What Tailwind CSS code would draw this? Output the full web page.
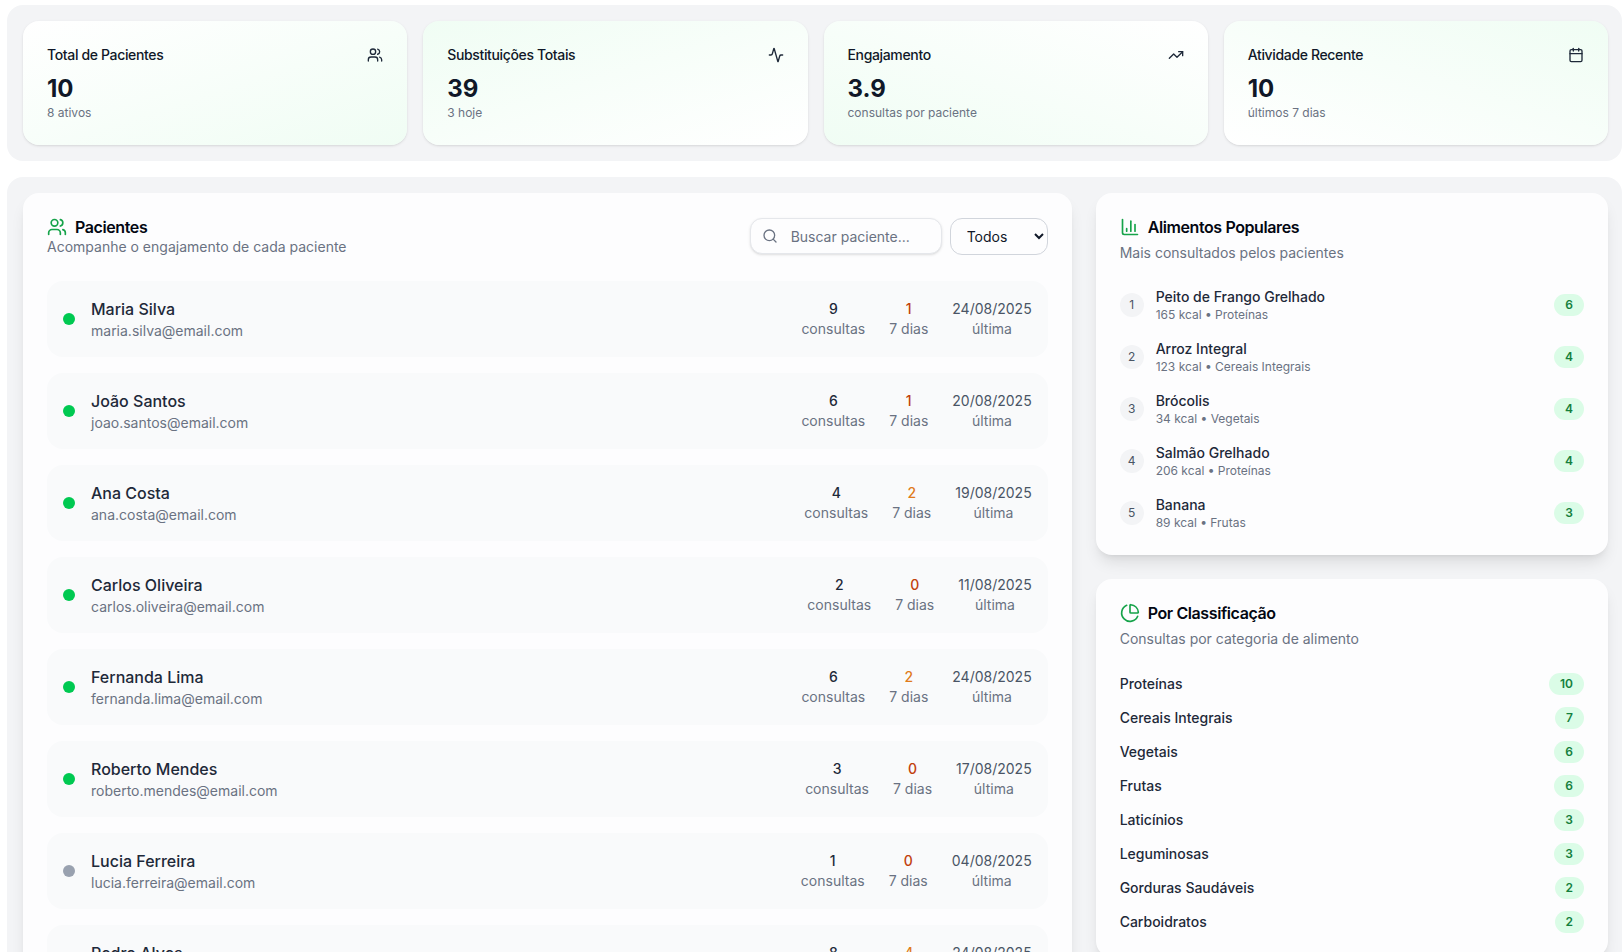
<!DOCTYPE html>
<html lang="pt-BR">
<head>
<meta charset="utf-8">
<title>Dashboard</title>
<script src="https://cdn.jsdelivr.net/npm/@tailwindcss/browser@4"></script>
</head>
<body class="bg-white font-['Inter',sans-serif] text-gray-900 h-screen overflow-hidden">
<div class="pl-[7px] pt-[5px] flex flex-col gap-4">
  <section class="bg-[#f3f4f6] rounded-2xl pl-4 pr-[14px] py-4">
    <div class="grid grid-cols-4 gap-4">
      <div class="rounded-2xl bg-linear-to-br from-white to-[#f0fdf4] shadow-sm">
        <div class="flex items-center justify-between px-6 pt-6 pb-2">
          <span class="text-sm font-medium tracking-tight">Total de Pacientes</span>
          <svg class="size-4 text-gray-800" viewBox="0 0 24 24" fill="none" stroke="currentColor" stroke-width="2" stroke-linecap="round" stroke-linejoin="round"><path d="M16 21v-2a4 4 0 0 0-4-4H6a4 4 0 0 0-4 4v2"/><circle cx="9" cy="7" r="4"/><path d="M22 21v-2a4 4 0 0 0-3-3.87"/><path d="M16 3.13a4 4 0 0 1 0 7.75"/></svg>
        </div>
        <div class="px-6 pb-6">
          <div class="text-2xl font-bold">10</div>
          <p class="text-xs text-gray-500">8 ativos</p>
        </div>
      </div>
      <div class="rounded-2xl bg-linear-to-br from-[#f0fdf4] to-white shadow-sm">
        <div class="flex items-center justify-between px-6 pt-6 pb-2">
          <span class="text-sm font-medium tracking-tight">Substituições Totais</span>
          <svg class="size-4 text-gray-800" viewBox="0 0 24 24" fill="none" stroke="currentColor" stroke-width="2" stroke-linecap="round" stroke-linejoin="round"><path d="M22 12h-2.48a2 2 0 0 0-1.93 1.46l-2.35 8.36a.25.25 0 0 1-.48 0L9.24 2.18a.25.25 0 0 0-.48 0l-2.35 8.36A2 2 0 0 1 4.49 12H2"/></svg>
        </div>
        <div class="px-6 pb-6">
          <div class="text-2xl font-bold">39</div>
          <p class="text-xs text-gray-500">3 hoje</p>
        </div>
      </div>
      <div class="rounded-2xl bg-linear-to-tr from-[#f0fdf4] to-white shadow-sm">
        <div class="flex items-center justify-between px-6 pt-6 pb-2">
          <span class="text-sm font-medium tracking-tight">Engajamento</span>
          <svg class="size-4 text-gray-800" viewBox="0 0 24 24" fill="none" stroke="currentColor" stroke-width="2" stroke-linecap="round" stroke-linejoin="round"><polyline points="22 7 13.5 15.5 8.5 10.5 2 17"/><polyline points="16 7 22 7 22 13"/></svg>
        </div>
        <div class="px-6 pb-6">
          <div class="text-2xl font-bold">3.9</div>
          <p class="text-xs text-gray-500">consultas por paciente</p>
        </div>
      </div>
      <div class="rounded-2xl bg-linear-to-bl from-[#f0fdf4] to-white shadow-sm">
        <div class="flex items-center justify-between px-6 pt-6 pb-2">
          <span class="text-sm font-medium tracking-tight">Atividade Recente</span>
          <svg class="size-4 text-gray-800" viewBox="0 0 24 24" fill="none" stroke="currentColor" stroke-width="2" stroke-linecap="round" stroke-linejoin="round"><path d="M8 2v4"/><path d="M16 2v4"/><rect x="3" y="4" width="18" height="18" rx="2"/><path d="M3 10h18"/></svg>
        </div>
        <div class="px-6 pb-6">
          <div class="text-2xl font-bold">10</div>
          <p class="text-xs text-gray-500">últimos 7 dias</p>
        </div>
      </div>
    </div>
  </section>

  <section class="bg-[#f3f4f6] rounded-2xl pl-4 pr-[14px] py-4">
    <div class="grid grid-cols-3 gap-6 items-start">
      <div class="col-span-2 bg-[#fdfdfe] rounded-2xl shadow-lg p-6">
        <div class="flex items-start justify-between mb-6">
          <div>
            <h2 class="flex items-center gap-2 text-base font-semibold leading-5 tracking-tight text-gray-950">
              <svg class="size-5 text-[#16a34a]" viewBox="0 0 24 24" fill="none" stroke="currentColor" stroke-width="2" stroke-linecap="round" stroke-linejoin="round"><path d="M16 21v-2a4 4 0 0 0-4-4H6a4 4 0 0 0-4 4v2"/><circle cx="9" cy="7" r="4"/><path d="M22 21v-2a4 4 0 0 0-3-3.87"/><path d="M16 3.13a4 4 0 0 1 0 7.75"/></svg>
              Pacientes
            </h2>
            <p class="text-sm text-gray-500">Acompanhe o engajamento de cada paciente</p>
          </div>
          <div class="flex items-start gap-2 pt-px">
            <div class="relative">
              <svg class="absolute left-3 top-[10px] size-4 text-gray-500" viewBox="0 0 24 24" fill="none" stroke="currentColor" stroke-width="2" stroke-linecap="round" stroke-linejoin="round"><circle cx="11" cy="11" r="8"/><path d="m21 21-4.3-4.3"/></svg>
              <input type="text" placeholder="Buscar paciente..." class="w-[192px] h-9 pl-10 pr-3 text-sm rounded-xl border border-gray-200 bg-[#fdfdfe] shadow-sm placeholder:text-gray-500">
            </div>
            <select class="w-[98px] h-[37px] pl-3 pr-2 text-sm rounded-xl border border-gray-300 bg-[#fdfdfe] text-gray-900">
              <option>Todos</option>
            </select>
          </div>
        </div>
        <div class="flex flex-col gap-4">
          <div class="flex items-center justify-between bg-gray-50 rounded-2xl p-4">
            <div class="flex items-center gap-4">
              <span class="size-3 rounded-full bg-green-500"></span>
              <div>
                <div class="font-medium text-gray-800">Maria Silva</div>
                <div class="text-sm text-gray-500">maria.silva@email.com</div>
              </div>
            </div>
            <div class="flex items-center gap-6 text-sm text-center">
              <div><div class="font-medium text-gray-800">9</div><div class="text-gray-500">consultas</div></div>
              <div><div class="font-medium text-[#c2410c]">1</div><div class="text-gray-500">7 dias</div></div>
              <div><div class="text-gray-600">24/08/2025</div><div class="text-gray-500">última</div></div>
            </div>
          </div>
          <div class="flex items-center justify-between bg-gray-50 rounded-2xl p-4">
            <div class="flex items-center gap-4">
              <span class="size-3 rounded-full bg-green-500"></span>
              <div>
                <div class="font-medium text-gray-800">João Santos</div>
                <div class="text-sm text-gray-500">joao.santos@email.com</div>
              </div>
            </div>
            <div class="flex items-center gap-6 text-sm text-center">
              <div><div class="font-medium text-gray-800">6</div><div class="text-gray-500">consultas</div></div>
              <div><div class="font-medium text-[#c2410c]">1</div><div class="text-gray-500">7 dias</div></div>
              <div><div class="text-gray-600">20/08/2025</div><div class="text-gray-500">última</div></div>
            </div>
          </div>
          <div class="flex items-center justify-between bg-gray-50 rounded-2xl p-4">
            <div class="flex items-center gap-4">
              <span class="size-3 rounded-full bg-green-500"></span>
              <div>
                <div class="font-medium text-gray-800">Ana Costa</div>
                <div class="text-sm text-gray-500">ana.costa@email.com</div>
              </div>
            </div>
            <div class="flex items-center gap-6 text-sm text-center">
              <div><div class="font-medium text-gray-800">4</div><div class="text-gray-500">consultas</div></div>
              <div><div class="font-medium text-[#e07b1a]">2</div><div class="text-gray-500">7 dias</div></div>
              <div><div class="text-gray-600">19/08/2025</div><div class="text-gray-500">última</div></div>
            </div>
          </div>
          <div class="flex items-center justify-between bg-gray-50 rounded-2xl p-4">
            <div class="flex items-center gap-4">
              <span class="size-3 rounded-full bg-green-500"></span>
              <div>
                <div class="font-medium text-gray-800">Carlos Oliveira</div>
                <div class="text-sm text-gray-500">carlos.oliveira@email.com</div>
              </div>
            </div>
            <div class="flex items-center gap-6 text-sm text-center">
              <div><div class="font-medium text-gray-800">2</div><div class="text-gray-500">consultas</div></div>
              <div><div class="font-medium text-[#c2410c]">0</div><div class="text-gray-500">7 dias</div></div>
              <div><div class="text-gray-600">11/08/2025</div><div class="text-gray-500">última</div></div>
            </div>
          </div>
          <div class="flex items-center justify-between bg-gray-50 rounded-2xl p-4">
            <div class="flex items-center gap-4">
              <span class="size-3 rounded-full bg-green-500"></span>
              <div>
                <div class="font-medium text-gray-800">Fernanda Lima</div>
                <div class="text-sm text-gray-500">fernanda.lima@email.com</div>
              </div>
            </div>
            <div class="flex items-center gap-6 text-sm text-center">
              <div><div class="font-medium text-gray-800">6</div><div class="text-gray-500">consultas</div></div>
              <div><div class="font-medium text-[#e07b1a]">2</div><div class="text-gray-500">7 dias</div></div>
              <div><div class="text-gray-600">24/08/2025</div><div class="text-gray-500">última</div></div>
            </div>
          </div>
          <div class="flex items-center justify-between bg-gray-50 rounded-2xl p-4">
            <div class="flex items-center gap-4">
              <span class="size-3 rounded-full bg-green-500"></span>
              <div>
                <div class="font-medium text-gray-800">Roberto Mendes</div>
                <div class="text-sm text-gray-500">roberto.mendes@email.com</div>
              </div>
            </div>
            <div class="flex items-center gap-6 text-sm text-center">
              <div><div class="font-medium text-gray-800">3</div><div class="text-gray-500">consultas</div></div>
              <div><div class="font-medium text-[#c2410c]">0</div><div class="text-gray-500">7 dias</div></div>
              <div><div class="text-gray-600">17/08/2025</div><div class="text-gray-500">última</div></div>
            </div>
          </div>
          <div class="flex items-center justify-between bg-gray-50 rounded-2xl p-4">
            <div class="flex items-center gap-4">
              <span class="size-3 rounded-full bg-gray-400"></span>
              <div>
                <div class="font-medium text-gray-800">Lucia Ferreira</div>
                <div class="text-sm text-gray-500">lucia.ferreira@email.com</div>
              </div>
            </div>
            <div class="flex items-center gap-6 text-sm text-center">
              <div><div class="font-medium text-gray-800">1</div><div class="text-gray-500">consultas</div></div>
              <div><div class="font-medium text-[#c2410c]">0</div><div class="text-gray-500">7 dias</div></div>
              <div><div class="text-gray-600">04/08/2025</div><div class="text-gray-500">última</div></div>
            </div>
          </div>
          <div class="flex items-center justify-between bg-gray-50 rounded-2xl p-4">
            <div class="flex items-center gap-4">
              <span class="size-3 rounded-full bg-green-500"></span>
              <div>
                <div class="font-medium text-gray-800">Pedro Alves</div>
                <div class="text-sm text-gray-500">pedro.alves@email.com</div>
              </div>
            </div>
            <div class="flex items-center gap-6 text-sm text-center">
              <div><div class="font-medium text-gray-800">8</div><div class="text-gray-500">consultas</div></div>
              <div><div class="font-medium text-[#e07b1a]">4</div><div class="text-gray-500">7 dias</div></div>
              <div><div class="text-gray-600">24/08/2025</div><div class="text-gray-500">última</div></div>
            </div>
          </div>
        </div>
      </div>

      <div class="flex flex-col gap-6">
        <div class="bg-[#fdfdfe] rounded-2xl shadow-lg p-6">
          <h2 class="flex items-center gap-2 text-base font-semibold leading-5 tracking-tight text-gray-950">
            <svg class="size-5 text-[#16a34a]" viewBox="0 0 24 24" fill="none" stroke="currentColor" stroke-width="2" stroke-linecap="round" stroke-linejoin="round"><path d="M3 3v16a2 2 0 0 0 2 2h16"/><path d="M18 17V9"/><path d="M13 17V5"/><path d="M8 17v-3"/></svg>
            Alimentos Populares
          </h2>
          <p class="text-sm text-gray-500 mt-1.5 mb-6">Mais consultados pelos pacientes</p>
          <div class="flex flex-col gap-4">
            <div class="flex items-center justify-between">
              <div class="flex items-center gap-3">
                <span class="size-6 rounded-full bg-gray-100 flex items-center justify-center text-xs text-gray-600">1</span>
                <div><div class="text-sm font-medium leading-5 text-gray-800">Peito de Frango Grelhado</div><div class="text-xs text-gray-500">165 kcal • Proteínas</div></div>
              </div>
              <span class="rounded-full bg-green-100 px-[11px] py-[3px] text-xs font-semibold text-[#15803d]">6</span>
            </div>
            <div class="flex items-center justify-between">
              <div class="flex items-center gap-3">
                <span class="size-6 rounded-full bg-gray-100 flex items-center justify-center text-xs text-gray-600">2</span>
                <div><div class="text-sm font-medium leading-5 text-gray-800">Arroz Integral</div><div class="text-xs text-gray-500">123 kcal • Cereais Integrais</div></div>
              </div>
              <span class="rounded-full bg-green-100 px-[11px] py-[3px] text-xs font-semibold text-[#15803d]">4</span>
            </div>
            <div class="flex items-center justify-between">
              <div class="flex items-center gap-3">
                <span class="size-6 rounded-full bg-gray-100 flex items-center justify-center text-xs text-gray-600">3</span>
                <div><div class="text-sm font-medium leading-5 text-gray-800">Brócolis</div><div class="text-xs text-gray-500">34 kcal • Vegetais</div></div>
              </div>
              <span class="rounded-full bg-green-100 px-[11px] py-[3px] text-xs font-semibold text-[#15803d]">4</span>
            </div>
            <div class="flex items-center justify-between">
              <div class="flex items-center gap-3">
                <span class="size-6 rounded-full bg-gray-100 flex items-center justify-center text-xs text-gray-600">4</span>
                <div><div class="text-sm font-medium leading-5 text-gray-800">Salmão Grelhado</div><div class="text-xs text-gray-500">206 kcal • Proteínas</div></div>
              </div>
              <span class="rounded-full bg-green-100 px-[11px] py-[3px] text-xs font-semibold text-[#15803d]">4</span>
            </div>
            <div class="flex items-center justify-between">
              <div class="flex items-center gap-3">
                <span class="size-6 rounded-full bg-gray-100 flex items-center justify-center text-xs text-gray-600">5</span>
                <div><div class="text-sm font-medium leading-5 text-gray-800">Banana</div><div class="text-xs text-gray-500">89 kcal • Frutas</div></div>
              </div>
              <span class="rounded-full bg-green-100 px-[11px] py-[3px] text-xs font-semibold text-[#15803d]">3</span>
            </div>
          </div>
        </div>

        <div class="bg-[#fdfdfe] rounded-2xl shadow-lg p-6">
          <h2 class="flex items-center gap-2 text-base font-semibold leading-5 tracking-tight text-gray-950">
            <svg class="size-5 text-[#16a34a]" viewBox="0 0 24 24" fill="none" stroke="currentColor" stroke-width="2" stroke-linecap="round" stroke-linejoin="round"><path d="M21 12c.552 0 1.005-.449.95-.998a10 10 0 0 0-8.953-8.951c-.55-.055-.998.398-.998.95v8a1 1 0 0 0 1 1z"/><path d="M21.21 15.89A10 10 0 1 1 8 2.83"/></svg>
            Por Classificação
          </h2>
          <p class="text-sm text-gray-500 mt-1.5 mb-6">Consultas por categoria de alimento</p>
          <div class="flex flex-col gap-3">
            <div class="flex items-center justify-between"><span class="text-sm font-medium text-gray-800">Proteínas</span><span class="rounded-full bg-green-100 px-[11px] py-[3px] text-xs font-semibold text-[#15803d]">10</span></div>
            <div class="flex items-center justify-between"><span class="text-sm font-medium text-gray-800">Cereais Integrais</span><span class="rounded-full bg-green-100 px-[11px] py-[3px] text-xs font-semibold text-[#15803d]">7</span></div>
            <div class="flex items-center justify-between"><span class="text-sm font-medium text-gray-800">Vegetais</span><span class="rounded-full bg-green-100 px-[11px] py-[3px] text-xs font-semibold text-[#15803d]">6</span></div>
            <div class="flex items-center justify-between"><span class="text-sm font-medium text-gray-800">Frutas</span><span class="rounded-full bg-green-100 px-[11px] py-[3px] text-xs font-semibold text-[#15803d]">6</span></div>
            <div class="flex items-center justify-between"><span class="text-sm font-medium text-gray-800">Laticínios</span><span class="rounded-full bg-green-100 px-[11px] py-[3px] text-xs font-semibold text-[#15803d]">3</span></div>
            <div class="flex items-center justify-between"><span class="text-sm font-medium text-gray-800">Leguminosas</span><span class="rounded-full bg-green-100 px-[11px] py-[3px] text-xs font-semibold text-[#15803d]">3</span></div>
            <div class="flex items-center justify-between"><span class="text-sm font-medium text-gray-800">Gorduras Saudáveis</span><span class="rounded-full bg-green-100 px-[11px] py-[3px] text-xs font-semibold text-[#15803d]">2</span></div>
            <div class="flex items-center justify-between"><span class="text-sm font-medium text-gray-800">Carboidratos</span><span class="rounded-full bg-green-100 px-[11px] py-[3px] text-xs font-semibold text-[#15803d]">2</span></div>
          </div>
        </div>
      </div>
    </div>
  </section>
</div>
</body>
</html>
